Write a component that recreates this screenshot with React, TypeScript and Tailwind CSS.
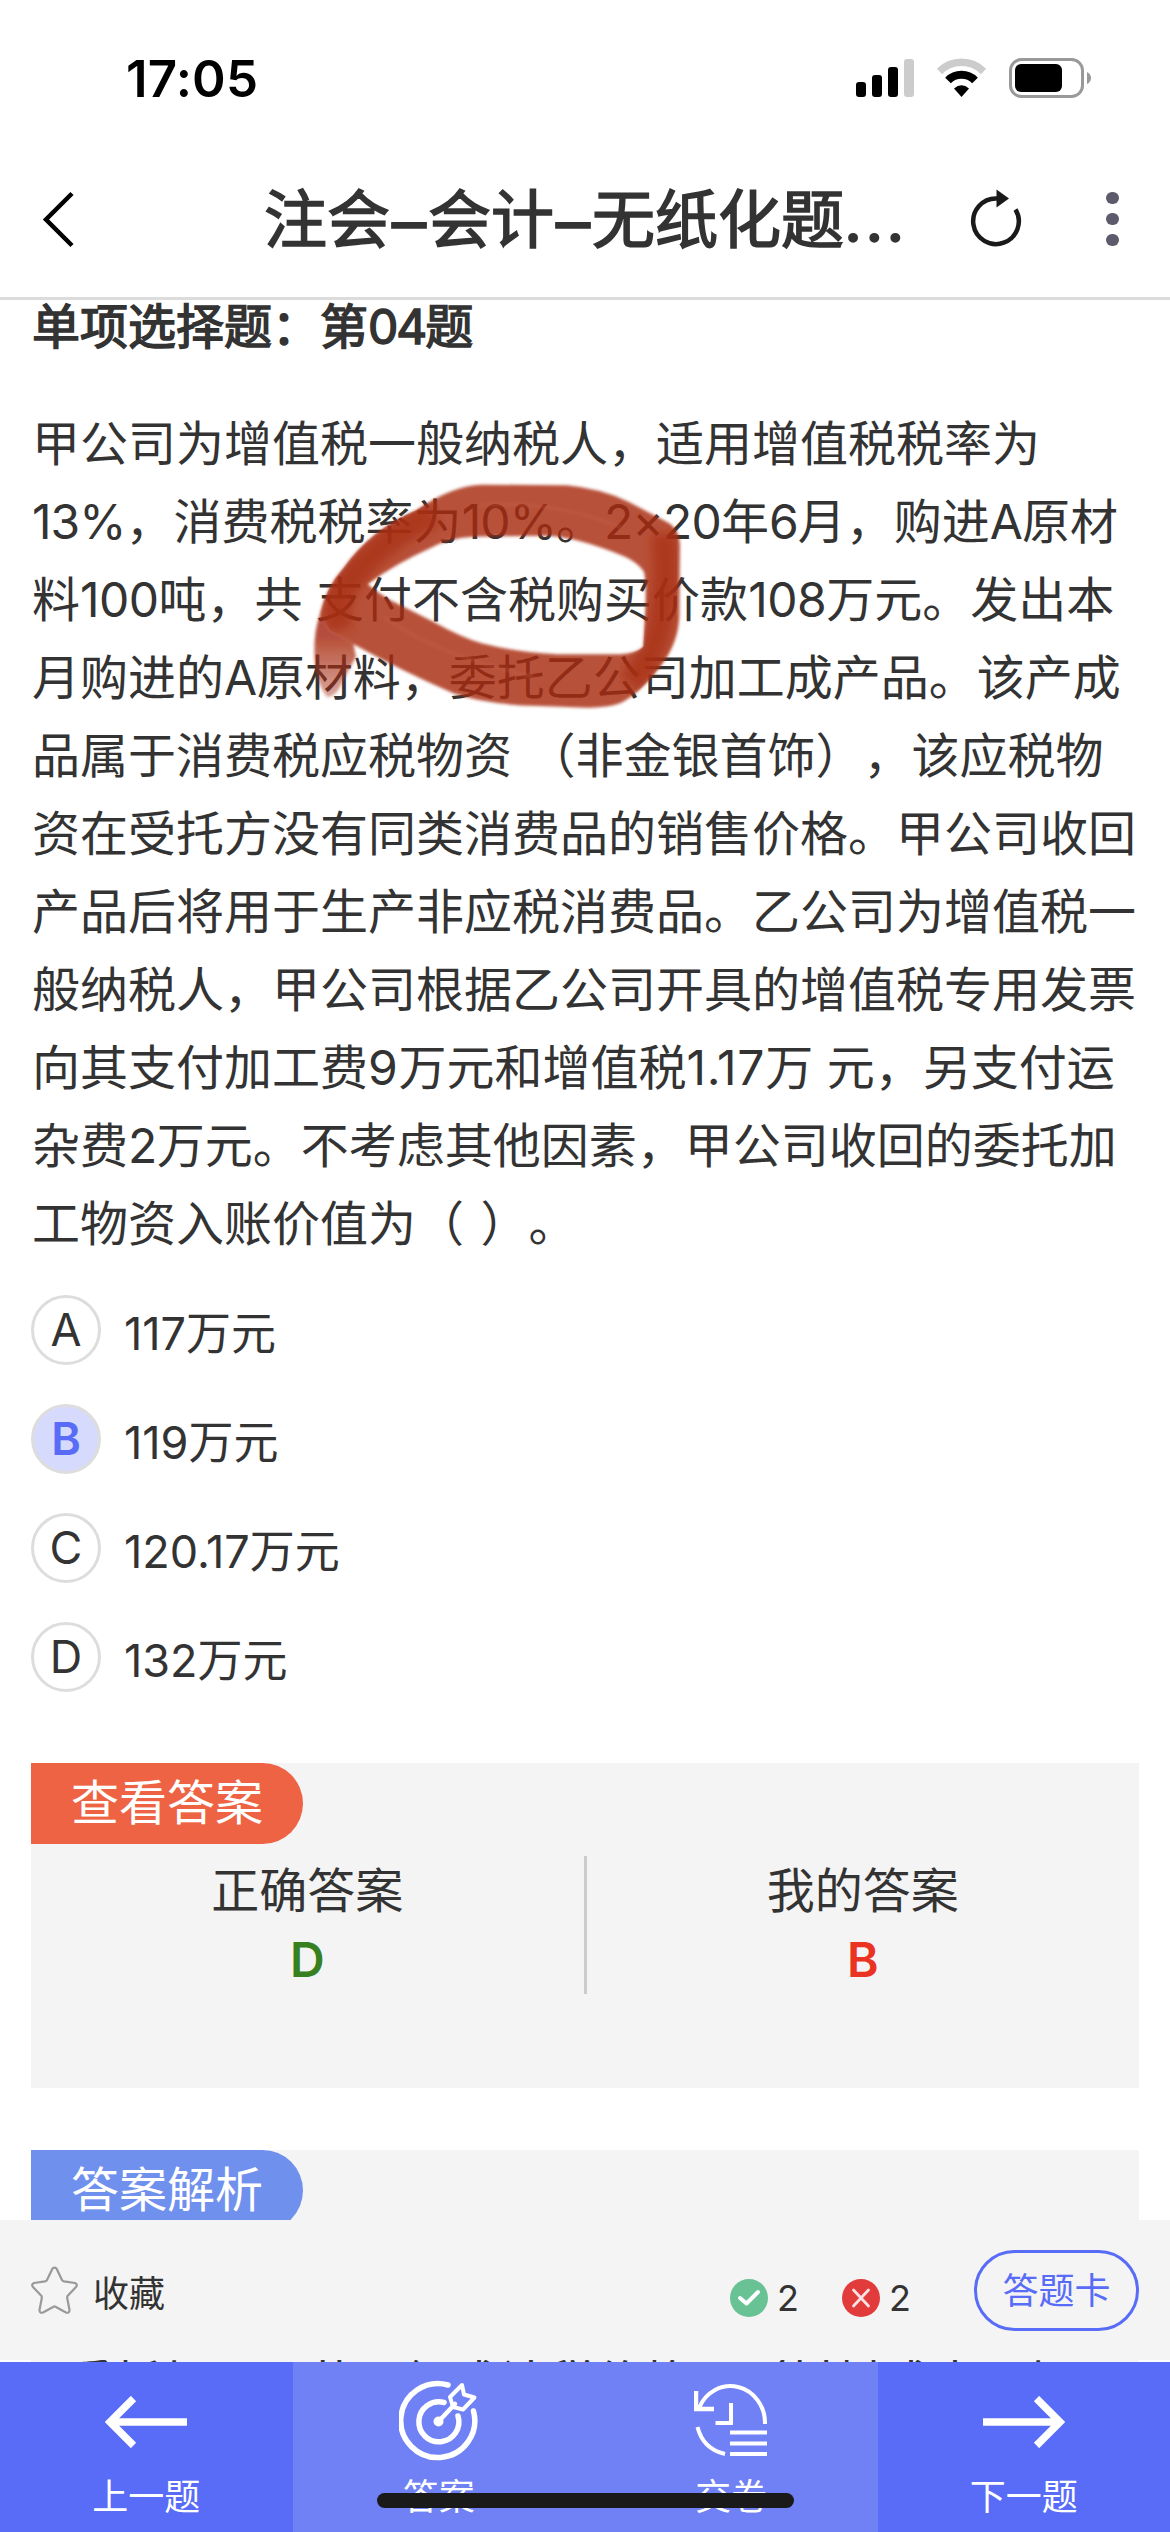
import type { ReactNode } from "react";

const FONT = "font-['Inter','Noto_Sans_CJK_SC',sans-serif]";

const questionLines: { text: string; latin: string }[] = [
  { text: "甲公司为增值税一般纳税人，适用增值税税率为", latin: "" },
  { text: "13%，消费税税率为10%。2×20年6月，购进A原材", latin: "tracking-[-0.9px]" },
  { text: "料100吨，共 支付不含税购买价款108万元。发出本", latin: "tracking-[-0.5px]" },
  { text: "月购进的A原材料，委托乙公司加工成产品。该产成", latin: "tracking-[-0.5px]" },
  { text: "品属于消费税应税物资 （非金银首饰），该应税物", latin: "tracking-[2px]" },
  { text: "资在受托方没有同类消费品的销售价格。甲公司收回", latin: "" },
  { text: "产品后将用于生产非应税消费品。乙公司为增值税一", latin: "" },
  { text: "般纳税人，甲公司根据乙公司开具的增值税专用发票", latin: "" },
  { text: "向其支付加工费9万元和增值税1.17万 元，另支付运", latin: "tracking-[0.7px]" },
  { text: "杂费2万元。不考虑其他因素，甲公司收回的委托加", latin: "tracking-[-0.5px]" },
  { text: "工物资入账价值为（ ） 。", latin: "tracking-[3px]" },
];

const options = [
  { key: "A", text: "117万元" },
  { key: "B", text: "119万元", selected: true },
  { key: "C", text: "120.17万元" },
  { key: "D", text: "132万元" },
];

function StatusIcons() {
  return (
    <svg width="240" height="48" viewBox="0 0 240 48" className="block">
      <rect x="1" y="27" width="10" height="15" rx="3" />
      <rect x="17" y="20" width="10" height="22" rx="3" />
      <rect x="33" y="12" width="10" height="30" rx="3" />
      <rect x="49" y="4" width="10" height="38" rx="3" fill="#ccc" />
      <g fill="none">
        <path d="M84.500 16.500a31 31 0 0 1 44 0" stroke="#ccc" strokeWidth="7.500" />
        <path d="M93 25.500a19 19 0 0 1 27 0" stroke="#000" strokeWidth="8" />
      </g>
      <path d="M106.500 42l-7.500-8.500q7.500-6.500 15 0z" />
      <rect x="155.500" y="4.500" width="72" height="37" rx="11" fill="none" stroke="#999" strokeWidth="3" />
      <rect x="160" y="9" width="47" height="28" rx="6" />
      <path d="M232 17q4 2 4 6t-4 6z" fill="#999" />
    </svg>
  );
}

const RING =
  "M60 430Q80 350 130 295Q210 180 350 120Q460 45 545 44L800 46Q900 55 985 95L1105 158Q1140 180 1140 230L1138 440Q1135 520 1080 590Q1020 670 960 700Q920 714 860 713L720 708Q560 705 460 670Q300 600 165 525L90 480ZM203 342Q215 355 270 390L400 455Q480 500 545 520Q640 545 770 553L960 553Q1010 550 1030 530L1036 420Q1040 340 1032 305Q1010 275 970 258Q830 200 740 197L520 200Q440 205 390 235Q290 280 203 342Z";

function Scribble() {
  return (
    <svg
      className="pointer-events-none absolute top-[470px] left-[300px]"
      width="400"
      height="250"
      viewBox="0 0 1200 750"
    >
      <defs>
        <filter id="soft" x="-10%" y="-10%" width="120%" height="120%">
          <feGaussianBlur stdDeviation="4" />
        </filter>
        <filter id="softer" x="-30%" y="-30%" width="160%" height="160%">
          <feGaussianBlur stdDeviation="14" />
        </filter>
        <linearGradient id="tail" x1="0" y1="500" x2="0" y2="690" gradientUnits="userSpaceOnUse">
          <stop offset="0" stopColor="#a82c14" stopOpacity=".84" />
          <stop offset="1" stopColor="#a82c14" stopOpacity=".4" />
        </linearGradient>
        <clipPath id="ring">
          <path clipRule="evenodd" d={RING} />
        </clipPath>
      </defs>
      <g filter="url(#soft)">
        <path fill="#a82c14" fillOpacity=".82" fillRule="evenodd" d={RING} />
        <path fill="url(#tail)" d="M61 430Q42 480 43 550Q46 640 82 682Q110 680 125 640L168 560L160 522L90 480Z" />
      </g>
      <g clipPath="url(#ring)" fill="none" stroke="#a82c14">
        <path d="M120 480Q90 380 160 320Q240 210 400 130" strokeWidth="80" strokeOpacity=".7" filter="url(#softer)" />
        <path d="M1090 190Q1105 320 1085 430Q1075 540 990 640" strokeWidth="74" strokeOpacity=".7" filter="url(#softer)" />
        <path
          d="M540 105Q760 90 960 170M250 440Q420 560 700 620"
          strokeWidth="8"
          stroke="#c9664f"
          strokeOpacity=".35"
          filter="url(#soft)"
        />
      </g>
    </svg>
  );
}

/** Splits a line so that Latin runs can carry their own tracking. */
function MixedLine({ text, latin }: { text: string; latin: string }) {
  return (
    <p className="whitespace-pre">
      {text.split(/([0-9A-Za-z%.×]+|(?<=（) (?=）)|(?<=资) )/).map((part, i) =>
        i % 2 ? (
          <span key={i} className={latin}>
            {part}
          </span>
        ) : (
          part.replace("） 。", "）。")
        ),
      )}
    </p>
  );
}

function Dash() {
  return <span className="relative top-[3px] inline-block w-[38px] scale-x-[1.08] text-center">–</span>;
}

function Badge({ label, className }: { label: string; className: string }) {
  return (
    <div
      className={`flex h-[81px] w-[272px] items-center rounded-r-full pl-[40px] text-[48px] leading-none text-white ${className}`}
    >
      <span className="relative -top-px whitespace-nowrap">{label}</span>
    </div>
  );
}

function NavItem({ label, icon, className }: { label: string; icon: ReactNode; className: string }) {
  return (
    <div className={`flex flex-1 flex-col items-center text-white ${className}`}>
      <div className="flex h-[117px] items-center justify-center">{icon}</div>
      <span className="text-[36px] leading-[36px]">{label}</span>
    </div>
  );
}

export default function App() {
  return (
    <div
      className={`relative flex h-[2532px] w-[1170px] flex-col overflow-hidden bg-white text-[#333] [text-spacing-trim:space-all] ${FONT}`}
    >
      <div className="flex h-[141px] shrink-0 items-start justify-between pt-[55px] pr-[75px] pl-[126px]">
        <span className="text-[51px] leading-[48px] font-semibold tracking-[0.2px] text-black">17:05</span>
        <StatusIcons />
      </div>

      <header className="flex h-[159px] shrink-0 items-center border-b-[3px] border-[#dcdcdc]">
        <svg
          width="40"
          height="60"
          viewBox="0 0 40 60"
          className="ml-[40px] shrink-0"
          fill="none"
          stroke="#000"
          strokeWidth="4.500"
        >
          <path d="M32 4.500L6 30.500L32 56.500" />
        </svg>
        <h1 className="ml-[184px] flex w-[650px] text-[63px] leading-[80px] whitespace-nowrap [-webkit-text-stroke:1.6px_#333]">
          注会
          <Dash />
          会计
          <Dash />
          无纸化题<span className="tracking-[3px]">...</span>
        </h1>
        <svg width="56" height="64" viewBox="0 0 56 64" className="ml-[55px] shrink-0">
          <path d="M46.500 22.500A22.800 22.800 0 1 1 28 11.500" fill="none" stroke="#1a1a1a" strokeWidth="4.500" />
          <path d="M27.500 2.500L40 11.500L27.500 20.500Z" fill="#1a1a1a" />
        </svg>
        <div className="ml-[81px] flex flex-col gap-[8.500px]">
          <i className="size-[12.500px] rounded-full bg-[#5c5a6b]" />
          <i className="size-[12.500px] rounded-full bg-[#5c5a6b]" />
          <i className="size-[12.500px] rounded-full bg-[#5c5a6b]" />
        </div>
      </header>

      <main className="h-[1920px] shrink-0 px-[31px]">
        <h2 className="h-[105px] pl-px text-[48px] leading-[54px] whitespace-nowrap [-webkit-text-stroke:1.5px_#333]">
          单项选择题：第<span className="tracking-[-2px]">04</span>题
        </h2>
        <div className="pl-px text-[48px] leading-[78px]">
          {questionLines.map((line) => (
            <MixedLine key={line.text} {...line} />
          ))}
        </div>
        <div className="mt-[32px] flex flex-col gap-[39px]">
          {options.map((o) => (
            <div key={o.key} className="flex h-[70px] items-center gap-[23px] text-[45px] leading-[70px]">
              <span
                className={
                  o.selected
                    ? "flex size-[70px] items-center justify-center rounded-full border-[3px] border-[#ddd] bg-[#d6dafc] font-semibold text-[#586cf7]"
                    : "flex size-[70px] items-center justify-center rounded-full border-[3px] border-[#ddd]"
                }
              >
                {o.key}
              </span>
              <span className="relative top-[4px]">{o.text}</span>
            </div>
          ))}
        </div>

        <section className="mt-[71px] h-[325px] bg-[#f4f4f4]">
          <Badge label="查看答案" className="bg-[#ed6343]" />
          <div className="mt-[12px] flex h-[138px] text-center text-[48px] leading-[69px]">
            <div className="flex-1">
              <p>正确答案</p>
              <p className="font-semibold text-[#37801f]">D</p>
            </div>
            <div className="w-[3px] bg-[#ccc]" />
            <div className="flex-1">
              <p>我的答案</p>
              <p className="font-semibold text-[#eb3323]">B</p>
            </div>
          </div>
        </section>

        <section className="mt-[62px] h-[210px] bg-[#f4f4f4]">
          <Badge label="答案解析" className="bg-[#7090ee]" />
        </section>
      </main>

      <div className="relative flex h-[140px] shrink-0 items-center bg-[#f4f4f4] px-[31px] text-[36px]">
        <svg
          width="47"
          height="48"
          viewBox="0 0 47 48"
          fill="none"
          stroke="#999"
          strokeWidth="2.200"
          strokeLinejoin="round"
        >
          <path d="M21.500 2.500Q23.500 .5 25.500 2.500L31 14Q31.500 15 33 15.300L44 17Q47 18.500 45 21L36.500 30Q36 31 36.200 32L38.500 44Q38.500 47.500 35 46.500L24.500 40.700Q23.500 40.200 22.500 40.700L12 46.500Q8.500 47.500 8.500 44L10.800 32Q11 31 10.500 30L2 21Q0 18.500 3 17L14 15.300Q15.500 15 16 14Z" />
        </svg>
        <span className="relative top-[4px] ml-[15px]">收藏</span>
        <div className="relative top-[8px] ml-auto flex items-center leading-[38px]">
          <svg width="38" height="38" viewBox="0 0 38 38" fill="none">
            <circle cx="19" cy="19" r="19" fill="#69c294" />
            <path
              d="M10 19L16.500 24.500L28 13"
              stroke="#fff"
              strokeWidth="4"
              strokeLinecap="round"
              strokeLinejoin="round"
            />
          </svg>
          <span className="ml-[9px]">2</span>
          <svg width="38" height="38" viewBox="0 0 38 38" fill="none" className="ml-[43px]">
            <circle cx="19" cy="19" r="19" fill="#e23b3b" />
            <path
              d="M11.500 11L26.500 27M26.500 11L11.500 27"
              stroke="#fff"
              strokeOpacity=".85"
              strokeWidth="2.800"
              strokeLinecap="round"
            />
          </svg>
          <span className="ml-[9px]">2</span>
        </div>
        <div className="ml-[63px] flex h-[81px] w-[165px] items-center justify-center rounded-full border-[3px] border-[#586cf7] text-[#586cf7]">
          <span className="relative top-px">答题卡</span>
        </div>
      </div>

      <div className="h-[2px] shrink-0 px-[31px]">
        <p className="h-[2px] bg-[#f4f4f4] pl-[36px] text-[48px] leading-[46px] whitespace-nowrap">
          委托加工环节而组成计税价格，（材料成本＋加工
        </p>
      </div>

      <nav className="relative flex h-[170px] shrink-0">
        <NavItem
          label="上一题"
          className="bg-[#586cf7]"
          icon={
            <svg
              width="82"
              height="52"
              viewBox="0 0 82 52"
              fill="none"
              stroke="#fff"
              strokeWidth="7.500"
              className="relative top-px"
            >
              <path d="M82 26H5M28.500 2.500L5 26L28.500 49.500" />
            </svg>
          }
        />
        <NavItem
          label="答案"
          className="bg-[#7080f5]"
          icon={
            <svg
              width="80"
              height="82"
              viewBox="0 0 80 82"
              fill="none"
              stroke="#fff"
              strokeWidth="5.500"
              strokeLinecap="round"
            >
              <path d="M49 5A37 37 0 1 0 74.500 31" />
              <path d="M45 22.500A20 20 0 1 0 59 36" />
              <circle cx="39.500" cy="41.500" r="5" fill="#fff" stroke="none" />
              <path d="M40 41L56 24" strokeWidth="4.500" />
              <path d="M54 27L51 17L63 5L65 14.500L75.500 17.500L64 29.500Z" strokeWidth="4" strokeLinejoin="round" />
            </svg>
          }
        />
        <NavItem
          label="交卷"
          className="bg-[#7080f5]"
          icon={
            <svg width="74" height="73" viewBox="0 0 74 73" fill="none" stroke="#fff" strokeWidth="4">
              <path d="M5 24A34.500 37 0 0 1 71 40" />
              <path d="M2 7V25H20" strokeWidth="4.500" />
              <path d="M3.500 43Q9 65 31 70" />
              <path d="M37 19V39H21.500" />
              <path d="M36 48.500H73M36 59.500H73M36 70H73" />
            </svg>
          }
        />
        <NavItem
          label="下一题"
          className="bg-[#586cf7]"
          icon={
            <svg
              width="82"
              height="52"
              viewBox="0 0 82 52"
              fill="none"
              stroke="#fff"
              strokeWidth="7.500"
              className="relative top-px"
            >
              <path d="M0 26H77M53.500 2.500L77 26L53.500 49.500" />
            </svg>
          }
        />
      </nav>

      <Scribble />
      <div className="absolute bottom-[24px] left-[377px] h-[15px] w-[417px] rounded-full bg-[#1a1a1a]" />
    </div>
  );
}
